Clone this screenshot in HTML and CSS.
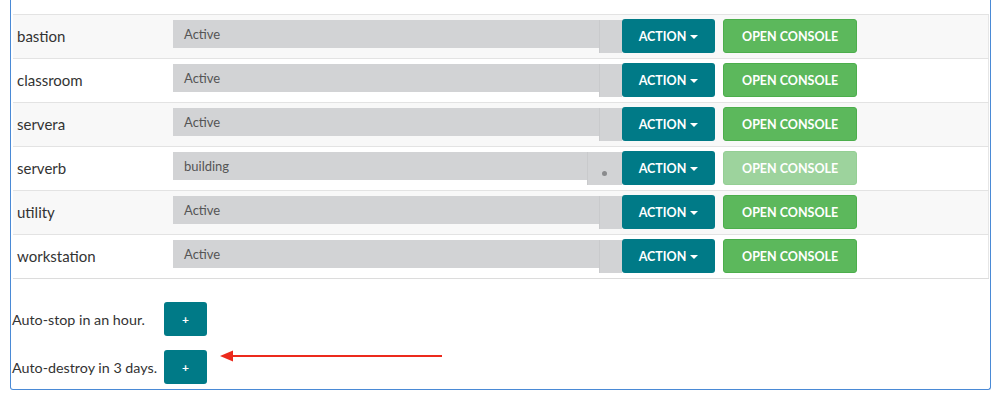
FILE: index.html
```html
<!DOCTYPE html>
<html lang="en">
<head>
    <meta charset="UTF-8">
    <meta name="viewport" content="width=device-width, initial-scale=1.0">
    <title>Lab Environment</title>
    <link rel="stylesheet" href="styles.css">
</head>
<body>
    <div class="panel">
        <!-- Machine list -->
        <table class="machines">
            <tr>
                <td class="name">bastion</td>
                <td class="status">
                    <div class="status-group">
                        <span class="status-text">Active</span>
                        <span class="status-addon"></span>
                    </div>
                </td>
                <td class="actions">
                    <button class="btn btn-action">ACTION <span class="caret"></span></button>
                    <button class="btn btn-console">OPEN CONSOLE</button>
                </td>
            </tr>
            <tr>
                <td class="name">classroom</td>
                <td class="status">
                    <div class="status-group">
                        <span class="status-text">Active</span>
                        <span class="status-addon"></span>
                    </div>
                </td>
                <td class="actions">
                    <button class="btn btn-action">ACTION <span class="caret"></span></button>
                    <button class="btn btn-console">OPEN CONSOLE</button>
                </td>
            </tr>
            <tr>
                <td class="name">servera</td>
                <td class="status">
                    <div class="status-group">
                        <span class="status-text">Active</span>
                        <span class="status-addon"></span>
                    </div>
                </td>
                <td class="actions">
                    <button class="btn btn-action">ACTION <span class="caret"></span></button>
                    <button class="btn btn-console">OPEN CONSOLE</button>
                </td>
            </tr>
            <tr>
                <td class="name">serverb</td>
                <td class="status">
                    <div class="status-group">
                        <span class="status-text">building</span>
                        <span class="status-addon wide"><span class="spinner"></span></span>
                    </div>
                </td>
                <td class="actions">
                    <button class="btn btn-action">ACTION <span class="caret"></span></button>
                    <button class="btn btn-console" disabled>OPEN CONSOLE</button>
                </td>
            </tr>
            <tr>
                <td class="name">utility</td>
                <td class="status">
                    <div class="status-group">
                        <span class="status-text">Active</span>
                        <span class="status-addon"></span>
                    </div>
                </td>
                <td class="actions">
                    <button class="btn btn-action">ACTION <span class="caret"></span></button>
                    <button class="btn btn-console">OPEN CONSOLE</button>
                </td>
            </tr>
            <tr>
                <td class="name">workstation</td>
                <td class="status">
                    <div class="status-group">
                        <span class="status-text">Active</span>
                        <span class="status-addon"></span>
                    </div>
                </td>
                <td class="actions">
                    <button class="btn btn-action">ACTION <span class="caret"></span></button>
                    <button class="btn btn-console">OPEN CONSOLE</button>
                </td>
            </tr>
        </table>

        <!-- Auto-stop / auto-destroy timers -->
        <div class="timers">
            <span class="timer-label">Auto-stop in an hour.</span>
            <button class="btn btn-plus">+</button>
            <span class="timer-label">Auto-destroy in 3 days.</span>
            <button class="btn btn-plus">+</button>
        </div>

        <!-- Annotation arrow -->
        <svg class="arrow" width="224" height="14" viewBox="0 0 224 14">
            <line x1="10" y1="7" x2="222" y2="7" stroke="#ec2a1c" stroke-width="2"/>
            <polygon points="0,7 13,1.5 13,12.5" fill="#ec2a1c"/>
        </svg>
    </div>
</body>
</html>
```

FILE: styles.css
```css
/* General styles */
body {
    margin: 0;
    font-family: Lato, "Open Sans", sans-serif;
    color: #333;
    background: #fff;
}

.panel {
    position: relative;
    margin: 0 7px 0 10px;
    padding: 14px 1px 5px 1px;
    border: 1px solid #4a8ad6;
    border-top: none;
    border-radius: 0 0 3px 3px;
}

/* Machine table */
.machines {
    width: calc(100% - 1px);
    margin-left: 1px;
    border-collapse: collapse;
    border-top: 1px solid #e3e3e3;
    border-bottom: 1px solid #dcdcdc;
    border-right: 1px solid #e6e6e6;
}

.machines tr {
    height: 43px;
    border-top: 1px solid #e3e3e3;
}

.machines tr:nth-child(odd) {
    background: #f8f8f8;
}

.machines td {
    padding: 0;
    vertical-align: top;
}

.name {
    width: 156px;
    padding-left: 4px !important;
    font-size: 15px;
    line-height: 43px;
}

.status {
    width: 449px;
    padding-top: 5px !important;
}

.status-group {
    display: flex;
    align-items: flex-start;
}

.status-text {
    flex: 1;
    height: 28px;
    padding-left: 11px;
    background: #d2d3d5;
    color: #555;
    font-size: 13px;
    line-height: 29px;
}

.status-addon {
    position: relative;
    width: 22px;
    height: 33px;
    background: #d2d3d5;
    border-left: 1px solid #c9cacc;
}

.status-addon.wide {
    width: 34px;
}

.spinner {
    position: absolute;
    left: 14px;
    top: 19px;
    width: 5px;
    height: 5px;
    border-radius: 50%;
    background: #8a8b8d;
}

.actions {
    padding-top: 4px !important;
    white-space: nowrap;
}

/* Buttons */
.btn {
    height: 34px;
    border: none;
    border-radius: 3px;
    color: #fff;
    font-family: Lato, "Open Sans", sans-serif;
    font-weight: 700;
    font-size: 12.5px;
    padding: 0;
    cursor: pointer;
}

.btn-action {
    width: 93px;
    background: #007a87;
}

.caret {
    display: inline-block;
    width: 0;
    height: 0;
    margin-left: 1px;
    vertical-align: middle;
    border-top: 4px solid #fff;
    border-left: 4px solid transparent;
    border-right: 4px solid transparent;
}

.btn-console {
    width: 134px;
    margin-left: 4px;
    background: #5cb85c;
    border: 1px solid #4cae4c;
}

.btn-console:disabled {
    background: #9dd39d;
    border-color: #94cf94;
    cursor: default;
}

.btn-plus {
    width: 43px;
    background: #007a87;
    font-size: 12px;
}

/* Timers */
.timers {
    display: grid;
    grid-template-columns: 152px auto;
    justify-content: start;
    align-items: center;
    row-gap: 14px;
    margin-top: 23px;
    font-size: 14.3px;
}

/* Annotation */
.arrow {
    position: absolute;
    left: 209px;
    bottom: 26px;
}
```
